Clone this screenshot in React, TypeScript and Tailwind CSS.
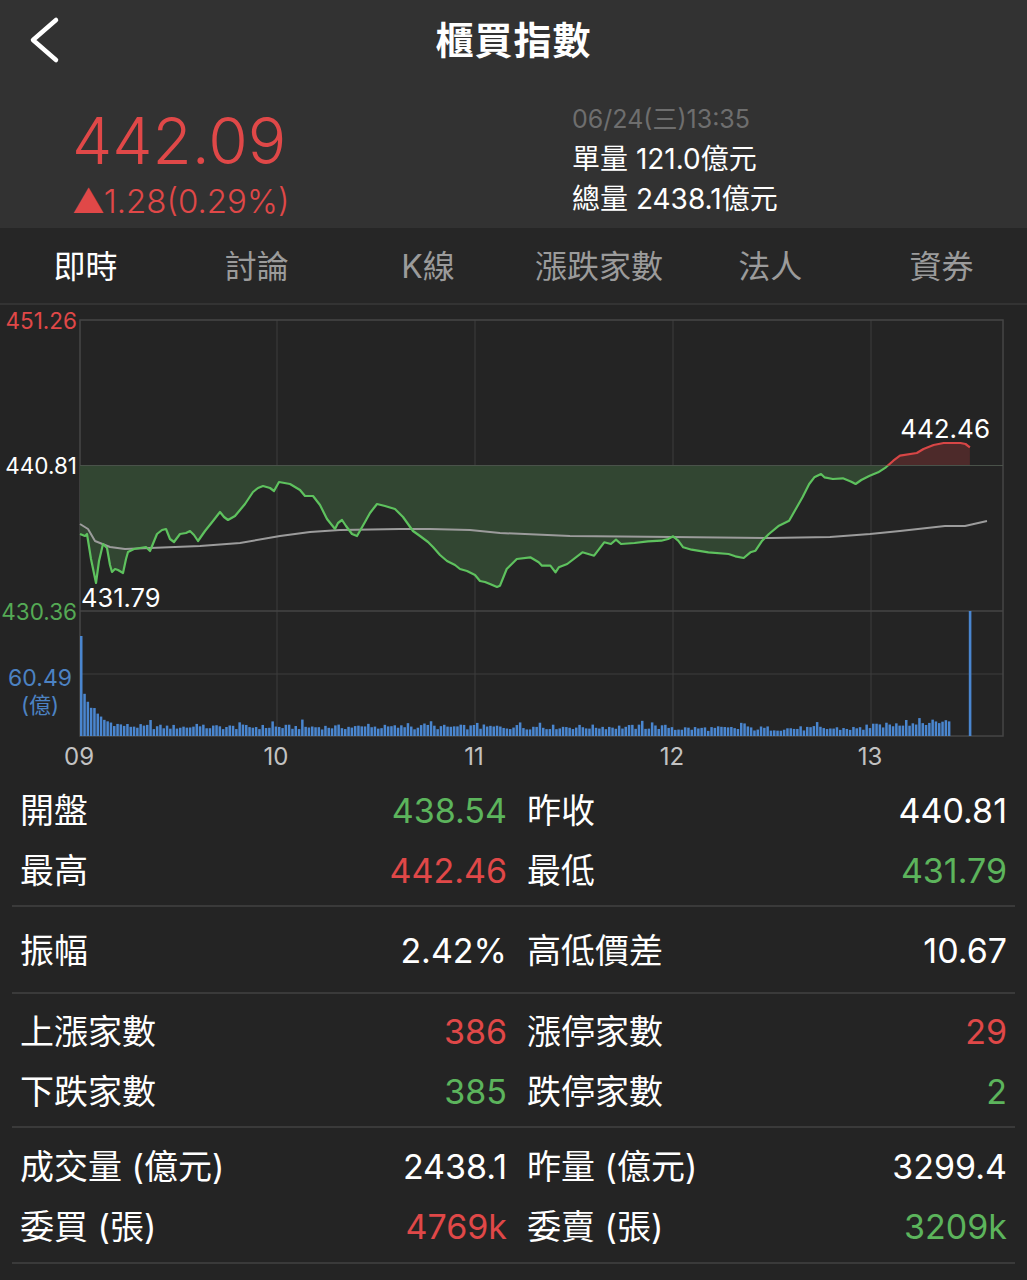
import React from 'react';

const FONT = "Inter, 'Noto Sans CJK TC', sans-serif";

const RED = '#e04848';
const BLUE = '#4a86cf';

// y positions inside the chart, in page pixels
const TOP = 321;
const BASE = 466.5;
const MID = 612;
const VOL_MID = 675;
const BOTTOM = 737;
const LEFT = 80;
const RIGHT = 1003;
const HOURS = [80, 277, 475, 673, 871];

const pricePts: [number, number][] = [
    [80, 535], [85, 537], [87, 535], [91, 560], [96, 584], [99, 562], [103, 545], [107, 549],
    [110, 566], [112, 573], [115, 570], [118, 571], [123, 574], [126, 560], [128, 553], [134, 550],
    [140, 549], [146, 548], [150, 552], [157, 535], [162, 531], [166, 530], [170, 540], [174, 543],
    [180, 535], [186, 534], [190, 532], [194, 536], [198, 542], [205, 532], [213, 522], [220, 513],
    [224, 518], [228, 521], [235, 517], [245, 505], [253, 493], [258, 489], [263, 487], [270, 489],
    [274, 492], [279, 483], [290, 485], [300, 491], [305, 497], [313, 497], [320, 506], [327, 520],
    [335, 530], [338, 524], [342, 521], [346, 527], [352, 535], [357, 537], [365, 523], [370, 514],
    [377, 505], [385, 507], [395, 510], [403, 518], [413, 532], [420, 537], [428, 543], [433, 548],
    [440, 556], [447, 562], [455, 566], [460, 570], [467, 572], [475, 576], [480, 582], [485, 583],
    [490, 585], [497, 588], [500, 586.7], [506.7, 570], [516.8, 560], [530.3, 558.3], [538.7, 563.3],
    [542, 566.7], [550.4, 566.7], [555.5, 573.3], [558.8, 568.3], [567.2, 565], [582.4, 553.3],
    [594.1, 556.7], [604.2, 543.3], [610.9, 545], [616, 540.7], [621, 545], [634.5, 544],
    [647.9, 542.3], [661.3, 541.7], [668.1, 540], [673.1, 537.3], [678.2, 541.7], [683.2, 548.3],
    [691.6, 550.7], [708.4, 553.3], [728.6, 555], [735.3, 557.3], [743.7, 559], [750.4, 553.3],
    [755.5, 551.7], [762.2, 541.7], [768.9, 535], [779, 526.7], [789.1, 521.7], [795.8, 510],
    [802.5, 498.3], [809.2, 485], [814.3, 478.3], [821, 475], [824.4, 478.3], [832.8, 480],
    [842.9, 479.3], [851.3, 482.7], [855.6, 485], [861.3, 481], [869.7, 476.7], [878.2, 473.3],
    [885.9, 468.3], [893.3, 461.7], [900, 456.7], [916.8, 454], [923.5, 450], [933.6, 446],
    [943.7, 444], [960.5, 444], [965.5, 445], [969.9, 448.3],
];

const avgPts: [number, number][] = [
    [80, 525], [88, 530], [95, 542], [110, 548], [125, 550], [150, 549], [200, 547], [240, 544],
    [280, 537], [310, 533], [340, 531], [400, 530], [430, 530], [470, 531], [500, 534], [570, 537],
    [673, 538], [770, 539], [830, 538], [870, 535], [900, 532], [945, 527], [965, 527], [987, 522],
];

const rand = (i: number) => {
    const v = Math.sin(i * 12.9898 + 78.233) * 43758.5453;
    return v - Math.floor(v);
};

// one bar per minute, 09:00 to 13:24
const volumes = Array.from({ length: 264 }, (_, i) => {
    if (i === 0) return 100;
    let base = 9 + 32 * Math.exp(-(i - 1) / 4);
    if (i >= 180 && i < 240) base = 7.5;
    if (i >= 240) base = 10 + (i - 240) * 0.22;
    let h = base + (rand(i) - 0.5) * 5;
    if (rand(i + 500) > 0.93) h += 5;
    return Math.max(3, h);
});

const toPath = (pts: [number, number][]) => pts.map(([x, y], i) => `${i ? 'L' : 'M'}${x} ${y}`).join(' ');

function Chart() {
    const line = toPath(pricePts);
    const last = pricePts[pricePts.length - 1];
    const area = `${line} L${last[0]} ${BASE} L${LEFT} ${BASE} Z`;
    return (
        <svg width="1027" height="464" viewBox="0 306 1027 464" className="block" style={{ fontFamily: FONT }}>
            <defs>
                <clipPath id="below">
                    <rect x="0" y={BASE} width="1027" height="300" />
                </clipPath>
                <clipPath id="above">
                    <rect x="0" y="300" width="1027" height={BASE - 300} />
                </clipPath>
            </defs>

            {/* grid */}
            {HOURS.slice(1).map(x => (
                <line key={x} x1={x} y1={TOP} x2={x} y2={BOTTOM} stroke="#3c3c3c" strokeWidth="1" />
            ))}
            <line x1={LEFT} y1={MID} x2={RIGHT} y2={MID} stroke="#444" strokeWidth="1.5" />
            <line x1={LEFT} y1={VOL_MID} x2={RIGHT} y2={VOL_MID} stroke="#3c3c3c" strokeWidth="1" />
            <rect x={LEFT} y={TOP} width={RIGHT - LEFT} height={BOTTOM - TOP} fill="none" stroke="#454545" strokeWidth="1.5" />

            {/* area against yesterday's close */}
            <path d={area} fill="#324632" clipPath="url(#below)" />
            <path d={area} fill="#4d2a2a" clipPath="url(#above)" />
            <line x1={LEFT} y1={BASE} x2={RIGHT} y2={BASE} stroke="#4a524a" strokeWidth="1" />

            <path d={toPath(avgPts)} fill="none" stroke="#9c9c9c" strokeWidth="2" strokeLinejoin="round" />
            <path d={line} fill="none" stroke="#5ec25e" strokeWidth="2.2" strokeLinejoin="round" clipPath="url(#below)" />
            <path d={line} fill="none" stroke="#d84646" strokeWidth="2.2" strokeLinejoin="round" clipPath="url(#above)" />

            {/* volume */}
            {volumes.map((h, i) => (
                <rect key={i} x={LEFT + i * 3.3} y={BOTTOM - h} width="2.5" height={h} fill={BLUE} />
            ))}
            <rect x="968.8" y={MID} width="2.6" height={BOTTOM - MID} fill={BLUE} />

            {/* axis labels */}
            <text x="77" y={TOP} fontSize="22.5" fill={RED} textAnchor="end" dominantBaseline="central">451.26</text>
            <text x="77" y={BASE} fontSize="22.5" fill="#ffffff" textAnchor="end" dominantBaseline="central">440.81</text>
            <text x="77" y={MID} fontSize="22.5" fill="#55aa55" textAnchor="end" dominantBaseline="central">430.36</text>
            <text x="72" y="679" fontSize="23" fill="#4c82c2" textAnchor="end" dominantBaseline="central">60.49</text>
            <text x="40" y="706" fontSize="22" fill="#4c82c2" textAnchor="middle" dominantBaseline="central">(億)</text>
            <text x="81" y="598" fontSize="25.5" fill="#ffffff" dominantBaseline="central">431.79</text>
            <text x="990" y="429" fontSize="26" fill="#ffffff" textAnchor="end" dominantBaseline="central">442.46</text>

            {['09', '10', '11', '12', '13'].map((t, i) => (
                <text key={t} x={HOURS[i] - 1} y="757" fontSize="24" fill="#c2c2c2" textAnchor="middle" dominantBaseline="central">{t}</text>
            ))}
        </svg>
    );
}

type Cell = { label: string; value: string; color: string };

const groups: { pt: string; pb: string; rows: [Cell, Cell][] }[] = [
    {
        pt: 'pt-[11px]', pb: 'pb-[5px]',
        rows: [
            [{ label: '開盤', value: '438.54', color: 'text-[#5cb45c]' }, { label: '昨收', value: '440.81', color: 'text-white' }],
            [{ label: '最高', value: '442.46', color: 'text-[#e04848]' }, { label: '最低', value: '431.79', color: 'text-[#5cb45c]' }],
        ],
    },
    {
        pt: 'pt-[13px]', pb: 'pb-[12px]',
        rows: [
            [{ label: '振幅', value: '2.42%', color: 'text-white' }, { label: '高低價差', value: '10.67', color: 'text-white' }],
        ],
    },
    {
        pt: 'pt-[7px]', pb: 'pb-[5px]',
        rows: [
            [{ label: '上漲家數', value: '386', color: 'text-[#e04848]' }, { label: '漲停家數', value: '29', color: 'text-[#e04848]' }],
            [{ label: '下跌家數', value: '385', color: 'text-[#5cb45c]' }, { label: '跌停家數', value: '2', color: 'text-[#5cb45c]' }],
        ],
    },
    {
        pt: 'pt-[8px]', pb: 'pb-[6px]',
        rows: [
            [{ label: '成交量 (億元)', value: '2438.1', color: 'text-white' }, { label: '昨量 (億元)', value: '3299.4', color: 'text-white' }],
            [{ label: '委買 (張)', value: '4769k', color: 'text-[#e04848]' }, { label: '委賣 (張)', value: '3209k', color: 'text-[#5cb45c]' }],
        ],
    },
];

const tabs = ['即時', '討論', 'K線', '漲跌家數', '法人', '資券'];

export default function App() {
    return (
        <div className="w-[1027px] min-h-[1280px] bg-[#242424] text-white" style={{ fontFamily: FONT }}>
            <div className="bg-[#323232] h-[228px]">
                <div className="grid grid-cols-[1fr_auto_1fr] items-center h-[80px]">
                    <svg width="40" height="48" viewBox="0 0 40 48" className="ml-[24px]">
                        <path d="M32 4 L9 24 L32 44" fill="none" stroke="#ffffff" strokeWidth="4.5" strokeLinecap="round" strokeLinejoin="round" />
                    </svg>
                    <div className="text-[38px] leading-[48px] font-bold tracking-[1px]">櫃買指數</div>
                    <div />
                </div>
                <div className="flex">
                    <div className="w-[572px] pl-[72px] pt-[29px] text-[#e04848] font-light">
                        <div className="text-[64px] leading-[64px]">442.09</div>
                        <div className="text-[33px] leading-[33px] mt-[12px]">▲1.28(0.29%)</div>
                    </div>
                    <div className="pt-[19px]">
                        <div className="text-[25px] leading-[40px] text-[#6e6e6e]">06/24(三)13:35</div>
                        <div className="text-[28px] leading-[40px]">單量 121.0億元</div>
                        <div className="text-[28px] leading-[40px]">總量 2438.1億元</div>
                    </div>
                </div>
            </div>

            <div className="grid grid-cols-6 h-[77px] pt-[3px] bg-[#262626] border-b-2 border-[#333333]">
                {tabs.map((t, i) => (
                    <div key={t} className={`flex items-center justify-center text-[32px] ${i === 0 ? 'text-white' : 'text-[#9b9b9b]'}`}>
                        {t}
                    </div>
                ))}
            </div>

            <Chart />

            <div>
                {groups.map((g, gi) => (
                    <div key={gi}>
                        <div className={`${g.pt} ${g.pb}`}>
                            {g.rows.map((row, ri) => (
                                <div key={ri} className="grid grid-cols-[487px_480px] gap-x-[20px] px-[20px] h-[60px]">
                                    {row.map(c => (
                                        <div key={c.label} className="flex items-center justify-between text-[34px]">
                                            <span>{c.label}</span>
                                            <span className={c.color}>{c.value}</span>
                                        </div>
                                    ))}
                                </div>
                            ))}
                        </div>
                        <div className="mx-[12px] h-[2px] bg-[#3a3a3a]" />
                    </div>
                ))}
            </div>
        </div>
    );
}
